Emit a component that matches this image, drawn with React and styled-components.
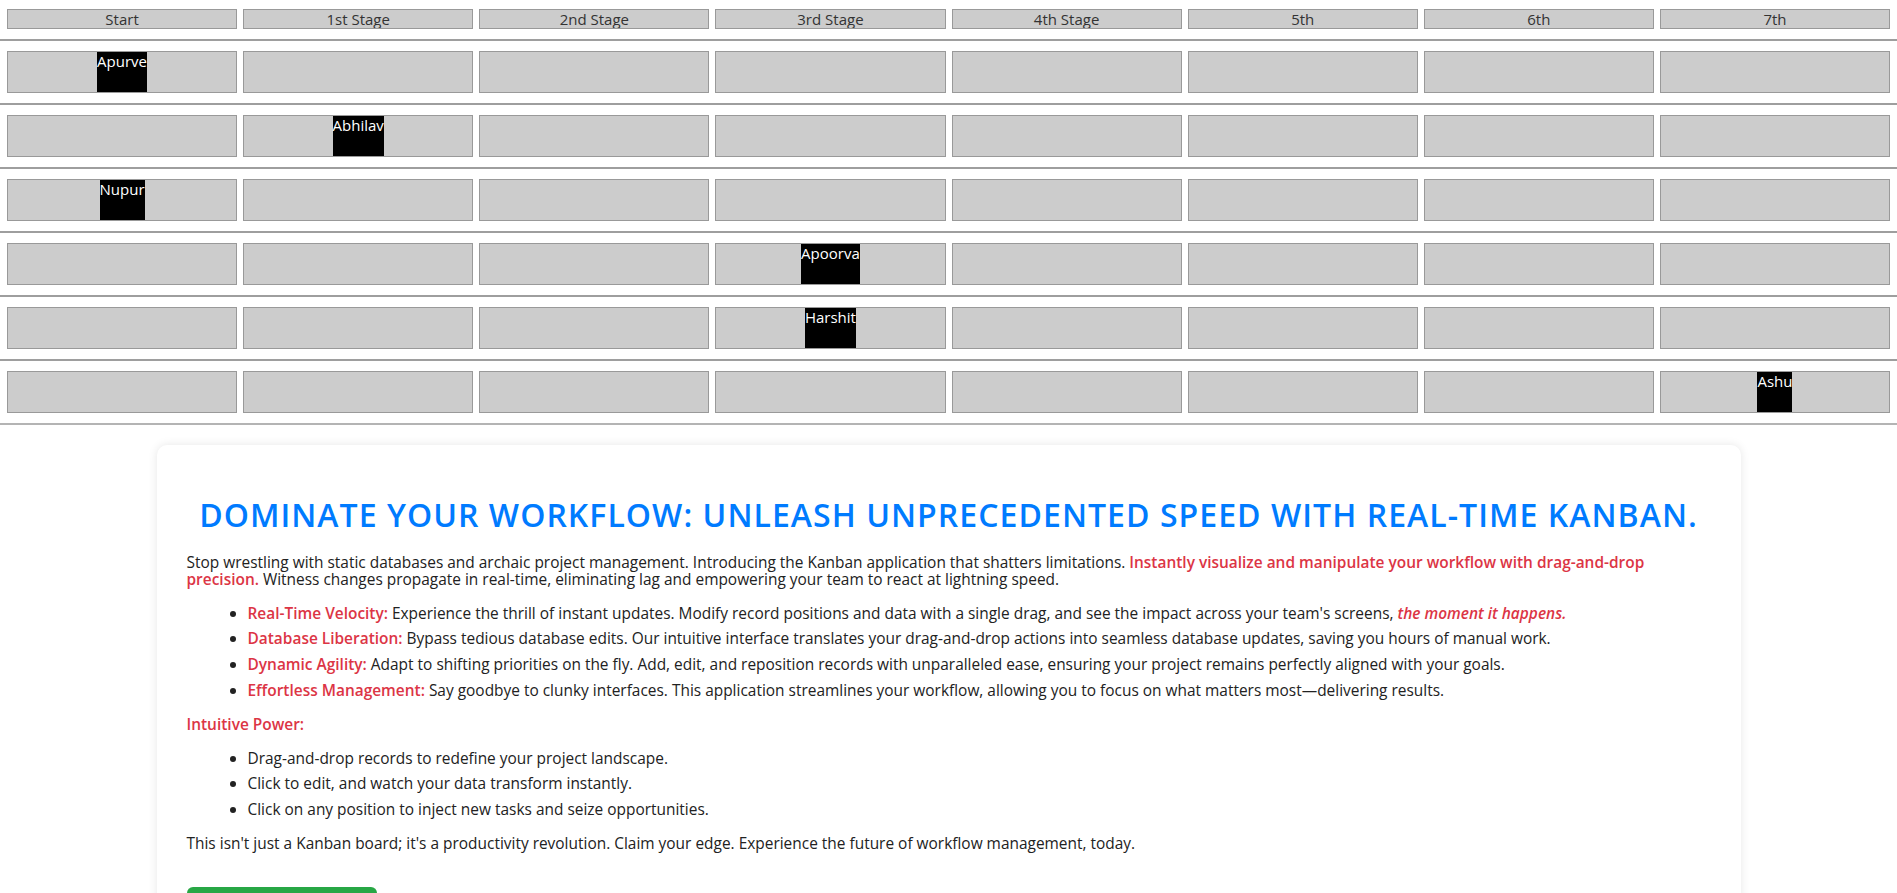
import React from "react";
import styled, { createGlobalStyle } from "styled-components";

const Global = createGlobalStyle`
  html, body { margin: 0; padding: 0; background: #fff; }
  body { font-family: "Open Sans", "Noto Sans", sans-serif; color: #222; }
  * { box-sizing: border-box; }
`;

const Board = styled.div`
  padding: 9px 0 1px;
`;

const Row = styled.div`
  display: grid;
  grid-template-columns: repeat(8, 1fr);
  column-gap: 6px;
  padding: 0 7px;
`;

const HeadCell = styled.div`
  height: 20px;
  background: #cccccc;
  border: 1px solid #999;
  text-align: center;
  font-size: 15px;
  line-height: 18px;
  color: #333;
  white-space: nowrap;
  overflow: hidden;
`;

const Cell = styled.div`
  height: 42px;
  background: #cccccc;
  border: 1px solid #999;
  display: flex;
  justify-content: center;
  align-items: stretch;
`;

const Card = styled.div`
  background: #000;
  color: #fff;
  font-size: 15px;
  line-height: 18px;
  white-space: nowrap;
  cursor: grab;
`;

const Divider = styled.div`
  height: ${(p) => (p.$last ? "1.5px" : "2px")};
  margin: 10px 0;
  background: ${(p) => (p.$last ? "#b4b4b4" : "#9e9e9e")};
`;

const Panel = styled.section`
  width: 1584px;
  margin: 9px auto 0;
  background: #fff;
  border-radius: 10px;
  box-shadow: 0 0 10px rgba(0, 0, 0, 0.1);
  padding: 51px 30px 30px;
  font-size: 15.45px;
`;

const Title = styled.h1`
  margin: 0 0 21px;
  text-align: center;
  color: #007bff;
  font-size: 32px;
  font-weight: 600;
  letter-spacing: 1.05px;
  line-height: 37px;
`;

const Para = styled.p`
  margin: 0 0 13px;
  line-height: 17px;
`;

const Accent = styled.span`
  color: #dc3545;
  font-weight: 600;
  font-style: ${(p) => (p.$italic ? "italic" : "normal")};
`;

const Heading = styled.p`
  margin: 0 0 13px;
  line-height: 17px;
  color: #dc3545;
  font-weight: 600;
`;

const List = styled.ul`
  margin: 0 0 12px;
  padding-left: 61px;
`;

const Item = styled.li`
  line-height: 25.8px;
`;

const Button = styled.button`
  margin-top: 22px;
  width: 190px;
  height: 44px;
  border: none;
  border-radius: 6px;
  background: #28a745;
  color: #fff;
  font-family: inherit;
  font-size: 16px;
`;

const stages = ["Start", "1st Stage", "2nd Stage", "3rd Stage", "4th Stage", "5th", "6th", "7th"];
const tasks = [
  { name: "Apurve", col: 0 },
  { name: "Abhilav", col: 1 },
  { name: "Nupur", col: 0 },
  { name: "Apoorva", col: 3 },
  { name: "Harshit", col: 3 },
  { name: "Ashu", col: 7 },
];

export default function App() {
  return (
    <>
      <Global />
      <Board>
        <Row>
          {stages.map((s) => (
            <HeadCell key={s}>{s}</HeadCell>
          ))}
        </Row>
        <Divider />
        {tasks.map((t, i) => (
          <React.Fragment key={t.name}>
            <Row>
              {stages.map((s, c) => (
                <Cell key={s}>{c === t.col && <Card>{t.name}</Card>}</Cell>
              ))}
            </Row>
            <Divider $last={i === tasks.length - 1} />
          </React.Fragment>
        ))}
      </Board>
      <Panel>
        <Title>DOMINATE YOUR WORKFLOW: UNLEASH UNPRECEDENTED SPEED WITH REAL-TIME KANBAN.</Title>
        <Para>
          Stop wrestling with static databases and archaic project management. Introducing the Kanban application
          that shatters limitations.{" "}
          <Accent>Instantly visualize and manipulate your workflow with drag-and-drop precision.</Accent> Witness
          changes propagate in real-time, eliminating lag and empowering your team to react at lightning speed.
        </Para>
        <List>
          <Item>
            <Accent>Real-Time Velocity:</Accent> Experience the thrill of instant updates. Modify record positions and
            data with a single drag, and see the impact across your team's screens,{" "}
            <Accent $italic>the moment it happens.</Accent>
          </Item>
          <Item>
            <Accent>Database Liberation:</Accent> Bypass tedious database edits. Our intuitive interface translates
            your drag-and-drop actions into seamless database updates, saving you hours of manual work.
          </Item>
          <Item>
            <Accent>Dynamic Agility:</Accent> Adapt to shifting priorities on the fly. Add, edit, and reposition
            records with unparalleled ease, ensuring your project remains perfectly aligned with your goals.
          </Item>
          <Item>
            <Accent>Effortless Management:</Accent> Say goodbye to clunky interfaces. This application streamlines
            your workflow, allowing you to focus on what matters most—delivering results.
          </Item>
        </List>
        <Heading>Intuitive Power:</Heading>
        <List>
          <Item>Drag-and-drop records to redefine your project landscape.</Item>
          <Item>Click to edit, and watch your data transform instantly.</Item>
          <Item>Click on any position to inject new tasks and seize opportunities.</Item>
        </List>
        <Para>
          This isn't just a Kanban board; it's a productivity revolution. Claim your edge. Experience the future of
          workflow management, today.
        </Para>
        <Button>Get Started Now</Button>
      </Panel>
    </>
  );
}
